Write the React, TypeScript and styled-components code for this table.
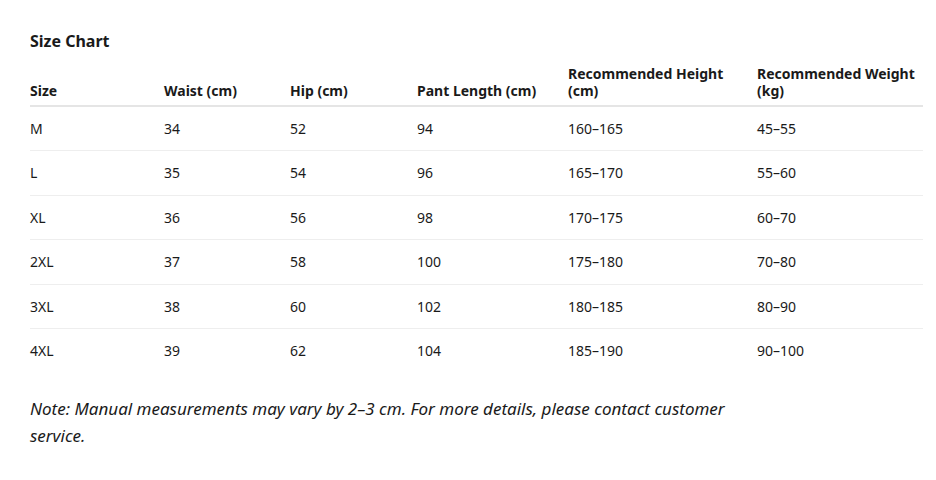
import React from "react";
import styled, { createGlobalStyle } from "styled-components";

const Global = createGlobalStyle`
  html, body { margin: 0; padding: 0; background: #ffffff; }
  body { font-family: "Noto Sans", "Open Sans", sans-serif; color: #1a1a1a; }
`;

const Page = styled.div`
  padding: 30px 13px 0 30px;
`;

const Title = styled.h2`
  margin: 0 0 13px 0;
  font-size: 16px;
  font-weight: 700;
  line-height: 22px;
`;

const Table = styled.table`
  width: 893px;
  table-layout: fixed;
  border-collapse: collapse;
  font-size: 14px;
`;

const Th = styled.th<{ $w: number }>`
  box-sizing: border-box;
  width: ${(p) => p.$w}px;
  text-align: left;
  vertical-align: bottom;
  font-weight: 700;
  line-height: 17px;
  padding: 0 8px 6px 0;
  border-bottom: 2px solid #e5e5e5;
`;

const Tr = styled.tr`
  & + & td { border-top: 1px solid #eeeeee; }
`;

const Td = styled.td`
  padding: 13px 8px 12.4px 0;
  line-height: 18px;
  font-weight: 400;
`;

const Note = styled.p`
  margin: 23px 0 0 0;
  width: 710px;
  font-style: italic;
  font-size: 17px;
  line-height: 27px;
`;

const cols = [
  { label: "Size", w: 134 },
  { label: "Waist (cm)", w: 126 },
  { label: "Hip (cm)", w: 127 },
  { label: "Pant Length (cm)", w: 151 },
  { label: "Recommended Height (cm)", w: 189 },
  { label: "Recommended Weight (kg)", w: 166 },
];

const rows = [
  ["M", "34", "52", "94", "160–165", "45–55"],
  ["L", "35", "54", "96", "165–170", "55–60"],
  ["XL", "36", "56", "98", "170–175", "60–70"],
  ["2XL", "37", "58", "100", "175–180", "70–80"],
  ["3XL", "38", "60", "102", "180–185", "80–90"],
  ["4XL", "39", "62", "104", "185–190", "90–100"],
];

export default function App() {
  return (
    <>
      <Global />
      <Page>
        <Title>Size Chart</Title>
        <Table>
          <thead>
            <tr>
              {cols.map((c) => (
                <Th key={c.label} $w={c.w}>
                  {c.label}
                </Th>
              ))}
            </tr>
          </thead>
          <tbody>
            {rows.map((r) => (
              <Tr key={r[0]}>
                {r.map((v, i) => (
                  <Td key={i}>{v}</Td>
                ))}
              </Tr>
            ))}
          </tbody>
        </Table>
        <Note>
          Note: Manual measurements may vary by 2–3 cm. For more details, please contact customer service.
        </Note>
      </Page>
    </>
  );
}
